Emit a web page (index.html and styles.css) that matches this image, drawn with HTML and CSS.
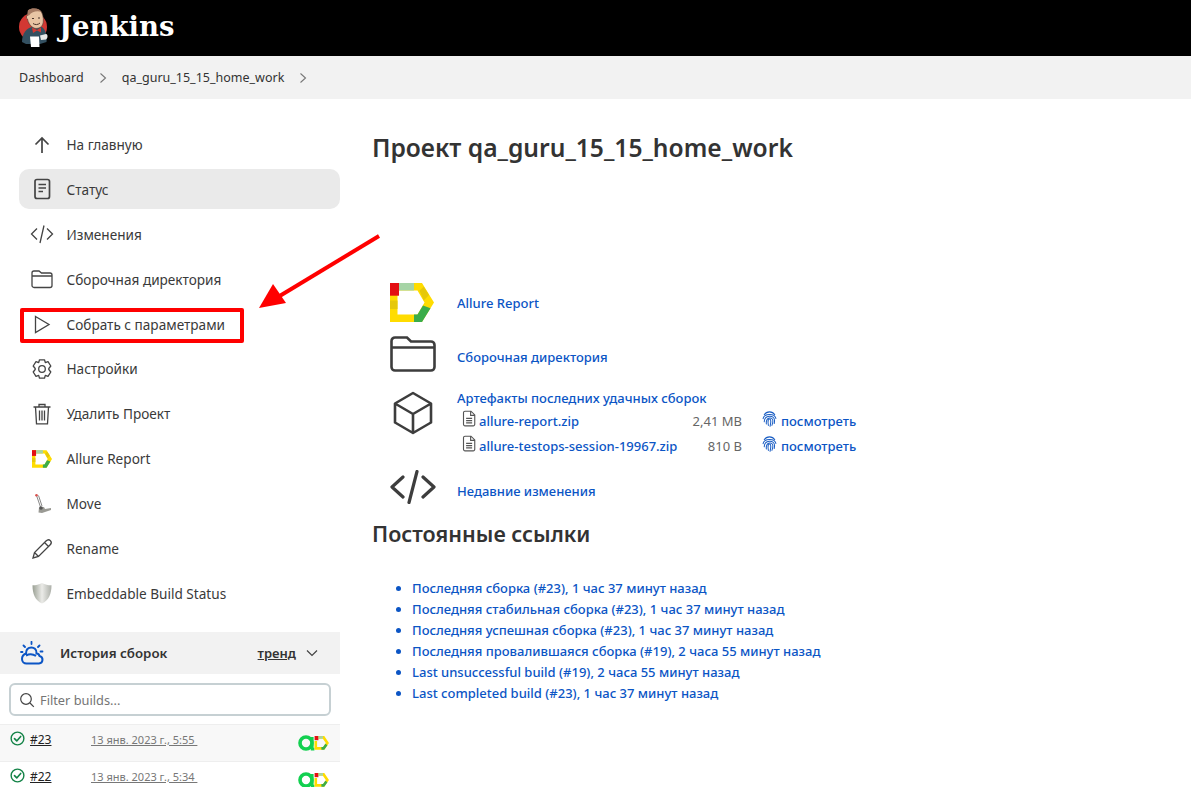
FILE: index.html
```html
<!DOCTYPE html>
<html lang="ru">
<head>
<meta charset="utf-8">
<title>qa_guru_15_15_home_work [Jenkins]</title>
<link rel="stylesheet" href="styles.css">
</head>
<body>
<svg class="defs" width="0" height="0" aria-hidden="true">
  <symbol id="allure" viewBox="0 0 44 39">
    <path d="M0 0H32L44 19.500L32 39H0ZM7.500 7.500V31.500H27.500L34.500 19.500L27.500 7.500Z" fill="#ffdc00" fill-rule="evenodd"/>
    <path d="M0 17.500H7.500V26H0Z" fill="#e6c80a"/>
    <path d="M0 0H9V12.700H0Z" fill="#e30f13"/>
    <path d="M9 0H24V7.500H9Z" fill="#a6d4a6"/>
    <path d="M29.500 7.500L33.800 3.700L39 12L33.800 17.500Z" fill="#e6c80a"/>
    <path d="M24 31.500H27.500L33 22.500L40.500 25.200L32 39H24Z" fill="#3bad4a"/>
  </symbol>
  <symbol id="doc" viewBox="0 0 16 18">
    <path d="M3.200 1.200H9.600L13.600 5.200V15.200A1.600 1.600 0 0 1 12 16.800H3.200A1.600 1.600 0 0 1 1.600 15.200V2.800A1.600 1.600 0 0 1 3.200 1.200ZM9.200 1.400V5.600H13.400M4.400 8.800H10.800M4.400 11.200H10.800M4.400 13.600H10.800" fill="none" stroke="#555" stroke-width="1.200"/>
  </symbol>
  <symbol id="print" viewBox="0 0 16 18">
    <g fill="none" stroke="#1c5fc4" stroke-width="1.100" stroke-linecap="round">
      <path d="M2.400 4.400C5 .4 11 .4 13.600 4.400"/>
      <path d="M1.200 8.600C2.400 3 13.400 2.800 14.800 8.400"/>
      <path d="M2.400 12C2.400 4.400 13.400 4 13.400 10.600C13.400 12 13.200 13 13 13.800"/>
      <path d="M4.600 14.400C3.800 7 11.400 6 11.600 10.800C11.600 12.400 11.200 14.600 10.600 15.800"/>
      <path d="M6.800 15.800C5.800 11 6.800 9 8 9C9.600 9 9.800 12 8.600 16.800"/>
    </g>
  </symbol>
  <symbol id="check" viewBox="0 0 16 16">
    <circle cx="8" cy="8" r="6.800" fill="none" stroke="#138347" stroke-width="1.500"/>
    <path d="M4.800 8.200L7.200 10.600L11.400 5.800" fill="none" stroke="#138347" stroke-width="1.700" stroke-linecap="round" stroke-linejoin="round"/>
  </symbol>
  <symbol id="testops" viewBox="0 0 31 16">
    <circle cx="8" cy="8" r="6" fill="none" stroke="#12d050" stroke-width="3.600"/>
    <path d="M14.200 2V14.200H16.400" fill="none" stroke="#12d050" stroke-width="2.800"/>
    <path d="M17.800 2.400H25.600L29.400 8L25.600 13.400H17.800V6" fill="none" stroke="#ffdc00" stroke-width="2.600"/>
    <path d="M16.600 1H20.400V5.200H16.600Z" fill="#e30f13"/>
    <path d="M20.400 2.400H25" fill="none" stroke="#a6d4a6" stroke-width="2.600"/>
    <path d="M28.400 9.600L25.600 13.400H23.400" fill="none" stroke="#3bad4a" stroke-width="2.600"/>
  </symbol>
</svg>

<header class="topbar">
  <svg class="butler" viewBox="0 0 32 40" width="32" height="40" aria-hidden="true">
    <circle cx="15" cy="19" r="14" fill="#d33833"/>
    <path d="M4 34C4 25 9 20 14 19L24 19C28 22 29 28 28.500 34L22 36H8Z" fill="#335061"/>
    <path d="M10 2.500C14 -.5 21 0 23.500 4C25.500 7.500 26 14 24.500 17C23 20 18 21.500 15 19.500C12 18 10 14 9.500 11C8 10.500 8 7.500 9.500 7.500Z" fill="#e8c4a4" stroke="#49322a" stroke-width=".6"/>
    <path d="M10 2.500C14 -.5 21 0 23.500 4C20 2.500 14 3 11 7.500L9.500 7.500Z" fill="#a67a63"/>
    <path d="M14 10.500H16M20 10H22M15 15.500C17 17 20 17 22 15" fill="none" stroke="#49322a" stroke-width="1"/>
    <path d="M14 19.500L19 22L23 19.500L23 24.500L19 22.500L15 25Z" fill="#d33833"/>
    <path d="M12 28.500H21L21.500 39H13Z" fill="#fff"/>
    <path d="M22 27.500L28 26C30 26.500 30 30 28 31.500L23 32Z" fill="#e8e8e8"/>
  </svg>
  <span class="brand">Jenkins</span>
</header>

<nav class="crumbs">
  <a class="crumb" href="#">Dashboard</a>
  <svg class="crumb-sep" viewBox="0 0 8 12" width="8" height="12" aria-hidden="true"><path d="M1.500 1.500L6.500 6L1.500 10.500" fill="none" stroke="#777" stroke-width="1.100"/></svg>
  <a class="crumb" href="#">qa_guru_15_15_home_work</a>
  <svg class="crumb-sep" viewBox="0 0 8 12" width="8" height="12" aria-hidden="true"><path d="M1.500 1.500L6.500 6L1.500 10.500" fill="none" stroke="#777" stroke-width="1.100"/></svg>
</nav>

<div class="page">
  <aside class="side">
    <ul class="tasks">
      <li class="task"><span class="task-ic"><svg viewBox="0 0 24 24" width="24" height="24"><path d="M12 20V5M5.500 11.500L12 5L18.500 11.500" class="ln"/></svg></span>На главную</li>
      <li class="task is-active"><span class="task-ic"><svg viewBox="0 0 24 24" width="24" height="24"><rect x="5" y="2.500" width="14.500" height="19" rx="2" class="ln"/><path d="M8.500 7.500H16M8.500 11H16M8.500 14.500H13" class="ln"/></svg></span>Статус</li>
      <li class="task"><span class="task-ic"><svg viewBox="0 0 24 24" width="24" height="24"><path d="M7 6.500L1.500 12L7 17.500M17 6.500L22.500 12L17 17.500M14 3.500L10 21" class="ln thin"/></svg></span>Изменения</li>
      <li class="task"><span class="task-ic"><svg viewBox="0 0 24 24" width="24" height="24"><path d="M2 6A2 2 0 0 1 4 4H9L11.500 6H20A2 2 0 0 1 22 8V18.500A2 2 0 0 1 20 20.500H4A2 2 0 0 1 2 18.500ZM2 9H22" class="ln thin"/></svg></span>Сборочная директория</li>
      <li class="task"><span class="task-ic"><svg viewBox="0 0 24 24" width="24" height="24"><path d="M5.500 4.500L19 12.500L5.500 20.500Z" class="ln thin"/></svg></span>Собрать с параметрами</li>
      <li class="task"><span class="task-ic"><svg viewBox="0 0 24 24" width="24" height="24"><path d="M9.500 2.800H14.500L15.300 5.600L18 4.600L20.800 9L18.800 11.500V12.500L20.800 15L18 19.400L15.300 18.400L14.500 21.200H9.500L8.700 18.400L6 19.400L3.200 15L5.200 12.500V11.500L3.200 9L6 4.600L8.700 5.600Z" class="ln thin" stroke-linejoin="round"/><circle cx="12" cy="12" r="3.300" class="ln thin"/></svg></span>Настройки</li>
      <li class="task"><span class="task-ic"><svg viewBox="0 0 24 24" width="24" height="24"><path d="M3.500 5H20.500M9 5V2.500H15V5M5.500 5L6.500 21.800H17.500L18.500 5M9.500 8.500V18.500M14.500 8.500V18.500M12 8.500V18.500" class="ln thin"/></svg></span>Удалить Проект</li>
      <li class="task"><span class="task-ic"><svg width="20" height="18"><use href="#allure"/></svg></span>Allure Report</li>
      <li class="task"><span class="task-ic"><svg viewBox="0 0 24 24" width="24" height="24"><path d="M6.500 3.500L10.500 15M8.500 3.500L12 14" stroke="#888" stroke-width="1" fill="none"/><circle cx="6.500" cy="3.200" r="1.300" fill="#d9534f"/><path d="M9 15.500L14 15L15 17L21 16L21 18L12 21L8.500 20.500Z" fill="#9a9a94"/><circle cx="11" cy="16" r="1.800" fill="#555"/></svg></span>Move</li>
      <li class="task"><span class="task-ic"><svg viewBox="0 0 24 24" width="24" height="24"><path d="M3 21L4.500 15.500L16 4C17.500 2.500 19.300 2.500 20.400 3.600C21.500 4.700 21.500 6.500 20 8L8.500 19.500ZM4.500 15.500L8.500 19.500M14.500 5.500L18.500 9.500" class="ln thin"/></svg></span>Rename</li>
      <li class="task"><span class="task-ic"><svg viewBox="0 0 24 24" width="24" height="24"><defs><linearGradient id="sh" x1="0" x2="1" y1="0" y2="0"><stop offset="0" stop-color="#9aa094"/><stop offset=".5" stop-color="#ebebe8"/><stop offset="1" stop-color="#adb0a9"/></linearGradient></defs><path d="M12 2C15 3.800 18 4.300 21.500 4.300C21.500 13 18.800 19.500 12 22.500C5.200 19.500 2.500 13 2.500 4.300C6 4.300 9 3.800 12 2Z" fill="url(#sh)"/></svg></span>Embeddable Build Status</li>
    </ul>

    <section class="history">
      <div class="hist-head">
        <svg class="hist-ic" viewBox="0 0 24 24" width="24" height="24" aria-hidden="true"><path d="M6.500 22.500H19A3.800 3.800 0 0 0 19.500 15C19 13 17.500 12.500 16.500 12.500C17 8 13.500 6.500 11.500 6.500C8 6.500 6 9 6 12.500C3.500 13.500 2 15.500 2 18C2 20.500 4 22.500 6.500 22.500ZM6 14.500C9 13 13 13 16 15" fill="none" stroke="#0b55c5" stroke-width="2"/><path d="M11.500 .8V3M3.500 4.500L5 6M19.500 4.500L18 6M1 11H2.500M20.500 10.500H22.500" fill="none" stroke="#0b55c5" stroke-width="1.800" stroke-linecap="round"/></svg>
        <span class="hist-title">История сборок</span>
        <a class="trend" href="#">тренд</a>
        <svg class="hist-chev" viewBox="0 0 12 8" width="12" height="8" aria-hidden="true"><path d="M1 1.500L6 6.500L11 1.500" fill="none" stroke="#444" stroke-width="1.200"/></svg>
      </div>
      <div class="filter-wrap">
        <label class="filter">
          <svg viewBox="0 0 16 16" width="16" height="16" aria-hidden="true"><circle cx="7" cy="7" r="5.300" fill="none" stroke="#444" stroke-width="1.200"/><path d="M11 11L14.800 14.800" stroke="#444" stroke-width="1.200"/></svg>
          <span class="filter-ph">Filter builds...</span>
        </label>
      </div>
      <div class="build">
        <svg class="build-ok" width="15" height="15"><use href="#check"/></svg>
        <a class="build-no" href="#">#23</a>
        <a class="build-date" href="#">13 янв. 2023 г., 5:55&nbsp;</a>
        <svg class="build-tools" width="31" height="16"><use href="#testops"/></svg>
      </div>
      <div class="build build-alt">
        <svg class="build-ok" width="15" height="15"><use href="#check"/></svg>
        <a class="build-no" href="#">#22</a>
        <a class="build-date" href="#">13 янв. 2023 г., 5:34&nbsp;</a>
        <svg class="build-tools" width="31" height="16"><use href="#testops"/></svg>
      </div>
    </section>
  </aside>

  <main class="main">
    <h1 class="title">Проект qa_guru_15_15_home_work</h1>

    <div class="links">
      <div class="lrow lrow-allure">
        <span class="lic"><svg width="44" height="39"><use href="#allure"/></svg></span>
        <a class="lnk" href="#">Allure Report</a>
      </div>
      <div class="lrow lrow-folder">
        <span class="lic"><svg viewBox="0 0 46 36" width="46" height="36"><path d="M1.500 5A3.500 3.500 0 0 1 5 1.500H17L21 5.500H41A3.500 3.500 0 0 1 44.500 9V31A3.500 3.500 0 0 1 41 34.500H5A3.500 3.500 0 0 1 1.500 31ZM1.500 11.500H44.500" fill="none" stroke="#3d3d3d" stroke-width="2.600"/></svg></span>
        <a class="lnk" href="#">Сборочная директория</a>
      </div>
      <div class="lrow lrow-art">
        <span class="lic"><svg viewBox="0 0 40 44" width="40" height="44"><path d="M20 2L38 12.500V31.500L20 42L2 31.500V12.500ZM2 12.500L20 23L38 12.500M20 23V42" fill="none" stroke="#3d3d3d" stroke-width="2.600" stroke-linejoin="round"/></svg></span>
        <div class="art">
          <a class="lnk art-head" href="#">Артефакты последних удачных сборок</a>
          <div class="art-file">
            <svg class="art-doc" width="15" height="17"><use href="#doc"/></svg>
            <a class="lnk art-name" href="#">allure-report.zip</a>
            <span class="art-size">2,41 MB</span>
            <svg class="art-print" width="15" height="18"><use href="#print"/></svg>
            <a class="lnk" href="#">посмотреть</a>
          </div>
          <div class="art-file">
            <svg class="art-doc" width="15" height="17"><use href="#doc"/></svg>
            <a class="lnk art-name" href="#">allure-testops-session-19967.zip</a>
            <span class="art-size">810 B</span>
            <svg class="art-print" width="15" height="18"><use href="#print"/></svg>
            <a class="lnk" href="#">посмотреть</a>
          </div>
        </div>
      </div>
      <div class="lrow lrow-code">
        <span class="lic"><svg viewBox="0 0 46 34" width="46" height="34"><path d="M13 7L2 17L13 27M33 7L44 17L33 27M27 1.500L19 32.500" fill="none" stroke="#3d3d3d" stroke-width="3.200" stroke-linecap="round" stroke-linejoin="round"/></svg></span>
        <a class="lnk" href="#">Недавние изменения</a>
      </div>
    </div>

    <h2 class="perma-title">Постоянные ссылки</h2>
    <ul class="perma">
      <li><a class="lnk" href="#">Последняя сборка (#23), 1 час 37 минут назад</a></li>
      <li><a class="lnk" href="#">Последняя стабильная сборка (#23), 1 час 37 минут назад</a></li>
      <li><a class="lnk" href="#">Последняя успешная сборка (#23), 1 час 37 минут назад</a></li>
      <li><a class="lnk" href="#">Последняя провалившаяся сборка (#19), 2 часа 55 минут назад</a></li>
      <li><a class="lnk" href="#">Last unsuccessful build (#19), 2 часа 55 минут назад</a></li>
      <li><a class="lnk" href="#">Last completed build (#23), 1 час 37 минут назад</a></li>
    </ul>
  </main>
</div>

<div class="mark-box"></div>
<svg class="mark-arrow" viewBox="0 0 130 80" width="130" height="80" aria-hidden="true">
  <path d="M125 3L24 64" stroke="#f00" stroke-width="4" fill="none"/>
  <path d="M5 75L19 51L32 70Z" fill="#f00"/>
</svg>
```

FILE: styles.css
```css
* { box-sizing: border-box; }
html, body { height: 787px; overflow: hidden; }
body {
  margin: 0;
  background: #fff;
  color: #333;
  font-family: "Noto Sans", "Open Sans", sans-serif;
  font-size: 13px;
  position: relative;
}
a { color: inherit; text-decoration: none; }
ul { list-style: none; margin: 0; padding: 0; }
.defs { position: absolute; }

.topbar {
  height: 56px;
  background: #000;
  display: flex;
  align-items: center;
  padding-left: 18px;
  gap: 9px;
}
.brand {
  color: #fff;
  font-family: "DejaVu Serif", serif;
  font-weight: 700;
  font-size: 27.500px;
  margin-top: -4px;
}

.crumbs {
  height: 43px;
  background: #f2f2f2;
  display: flex;
  align-items: center;
  padding-left: 19px;
  color: #333;
  font-size: 12.500px;
}
.crumb-sep { margin: 0 15px 0 15px; }

.page { display: flex; }
.side { width: 340px; flex: none; padding-top: 25.500px; }
.tasks {
  display: flex;
  flex-direction: column;
  gap: 4.900px;
  margin-left: 19px;
  font-size: 13.600px;
}
.task {
  height: 40px;
  display: flex;
  align-items: center;
  border-radius: 10px;
  color: #3a3a3a;
}
.task.is-active { background: #eaeaea; }
.task-ic {
  width: 47.500px;
  padding-right: 1px;
  display: flex;
  justify-content: center;
  flex: none;
}
.ln {
  fill: none;
  stroke: #444;
  stroke-width: 1.700;
}
.ln.thin { stroke-width: 1.300; }

.history { margin-top: 18.500px; }
.hist-head {
  height: 42px;
  background: #f2f2f2;
  display: flex;
  align-items: center;
  padding-left: 20px;
}
.hist-title { margin-left: 16px; font-weight: 600; flex: 1; font-size: 13.300px; }
.trend { font-weight: 600; text-decoration: underline; color: #333; }
.hist-chev { margin: 0 22px 0 10px; }
.filter-wrap { padding: 9px 9px 8px; }
.filter {
  height: 33px;
  border: 2px solid #c6d0d3;
  border-radius: 6px;
  display: flex;
  align-items: center;
  padding: 1px 0 0 8px;
  gap: 5px;
  background: #fff;
}
.filter-ph { color: #757575; font-size: 12.800px; }
.build {
  height: 37px;
  background: #f8f8f8;
  border-top: 1px solid #eee;
  display: flex;
  align-items: flex-start;
  position: relative;
  padding: 6px 11px 0 10px;
}
.build-alt { background: #fff; }
.build-ok { flex: none; margin-right: 5px; }
.build-no { width: 61px; font-size: 12px; text-decoration: underline; color: #222; margin-top: 0; }
.build-date { flex: 1; color: #777; font-size: 11px; text-decoration: underline; margin-top: 1px; }
.build-tools { margin-top: 4px; }

.main { flex: 1; padding: 32px 0 0 32px; }
.title {
  margin: 0;
  font-size: 24.600px;
  line-height: 34px;
  font-weight: 600;
  color: #333;
}
.links { margin-top: 117px; display: flex; flex-direction: column; }
.lrow { display: flex; align-items: center; }
.lic { width: 85px; padding-left: 18px; flex: none; display: flex; }
.lnk { color: #0b55c5; font-weight: 500; }
.lrow-allure { height: 40px; }
.lrow-allure .lnk { margin-top: 2px; }
.lrow-folder { height: 36px; margin-top: 14px; }
.lrow-folder .lnk { margin-top: 6px; }
.lrow-art { margin-top: 17px; align-items: flex-start; }
.lrow-art .lic { padding-left: 21px; padding-top: 2px; }
.art { display: flex; flex-direction: column; }
.art-head { line-height: 19px; }
.art-file { display: flex; align-items: center; height: 25px; padding-left: 5px; }
.art-doc { flex: none; margin-right: 2px; margin-top: -4px; }
.art-name { width: 206px; }
.art-size { width: 57px; text-align: right; color: #666; }
.art-print { margin: -4px 4px 0 20px; }
.lrow-code { height: 34px; margin-top: 12px; }
.lrow-code .lnk { margin-top: 7px; }

.perma-title {
  margin: 16px 0 0;
  font-size: 21.500px;
  line-height: 28px;
  font-weight: 600;
  color: #333;
}
.perma { margin-top: 30px; padding-left: 40px; list-style: disc; }
.perma li { height: 21px; line-height: 21px; color: #0b55c5; }

.mark-box {
  position: absolute;
  left: 20px;
  top: 308px;
  width: 224px;
  height: 35px;
  border: 4px solid #f00;
  border-radius: 2px;
}
.mark-arrow {
  position: absolute;
  left: 254px;
  top: 233px;
}
```
